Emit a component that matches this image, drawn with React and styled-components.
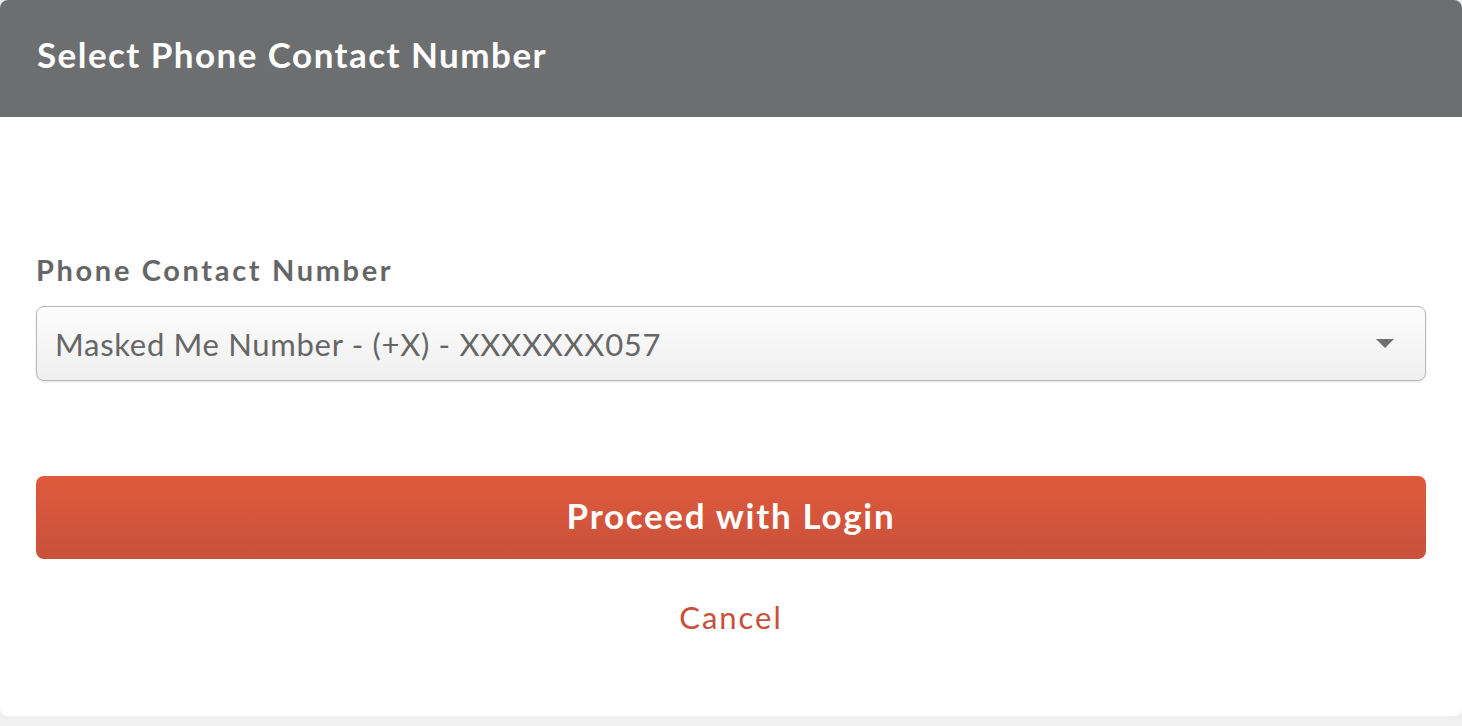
import styled, { createGlobalStyle } from "styled-components";

const GlobalStyle = createGlobalStyle`
  html, body {
    margin: 0;
    padding: 0;
    background: #f0f0f0;
    font-family: Lato, "Open Sans", sans-serif;
  }
`;

const Page = styled.div`
  width: 1462px;
  height: 726px;
  background: #f0f0f0;
`;

const Modal = styled.div`
  background: #ffffff;
  border-radius: 8px;
  overflow: hidden;
  height: 716px;
  display: flex;
  flex-direction: column;
`;

const Header = styled.div`
  background: #6d6e70;
  height: 117px;
  display: flex;
  align-items: center;
  padding: 0 37px;
  box-sizing: border-box;
`;

const Title = styled.h1`
  margin: 0;
  color: #ffffff;
  font-size: 35px;
  font-weight: 700;
  letter-spacing: 1.45px;
  padding-bottom: 9px;
`;

const Body = styled.div`
  padding: 136px 36px 0 36px;
  display: flex;
  flex-direction: column;
`;

const Label = styled.label`
  color: #666666;
  font-size: 29px;
  font-weight: 700;
  letter-spacing: 2.65px;
  margin: 0 0 19px 0;
  line-height: 34px;
`;

const SelectBox = styled.div`
  height: 75px;
  box-sizing: border-box;
  border: 1.5px solid #b8b8b8;
  border-radius: 8px;
  background: linear-gradient(to bottom, #fdfdfd, #efefef);
  box-shadow: 0 1px 2px rgba(0, 0, 0, 0.12);
  display: flex;
  align-items: center;
  justify-content: space-between;
  padding: 0 31px 0 18px;
`;

const SelectText = styled.span`
  color: #666666;
  font-size: 31px;
  font-weight: 400;
  letter-spacing: 0.7px;
`;

const Caret = styled.span`
  width: 0;
  height: 0;
  border-left: 9px solid transparent;
  border-right: 9px solid transparent;
  border-top: 9px solid #707070;
`;

const PrimaryButton = styled.button`
  margin-top: 95px;
  height: 83px;
  padding: 0 0 5px;
  border: none;
  border-radius: 8px;
  background: linear-gradient(to bottom, #e05a3d, #c8513a);
  color: #ffffff;
  font-family: inherit;
  font-size: 35px;
  font-weight: 700;
  letter-spacing: 1.7px;
  cursor: pointer;
`;

const LinkButton = styled.button`
  margin: 38px auto 0;
  background: none;
  border: none;
  color: #c9503a;
  font-family: inherit;
  font-size: 31px;
  font-weight: 400;
  letter-spacing: 2px;
  cursor: pointer;
`;

export default function App() {
  return (
    <>
      <GlobalStyle />
      <Page>
        <Modal>
          <Header>
            <Title>Select Phone Contact Number</Title>
          </Header>
          <Body>
            <Label>Phone Contact Number</Label>
            <SelectBox>
              <SelectText>Masked Me Number - (+X) - XXXXXXX057</SelectText>
              <Caret />
            </SelectBox>
            <PrimaryButton>Proceed with Login</PrimaryButton>
            <LinkButton>Cancel</LinkButton>
          </Body>
        </Modal>
      </Page>
    </>
  );
}
